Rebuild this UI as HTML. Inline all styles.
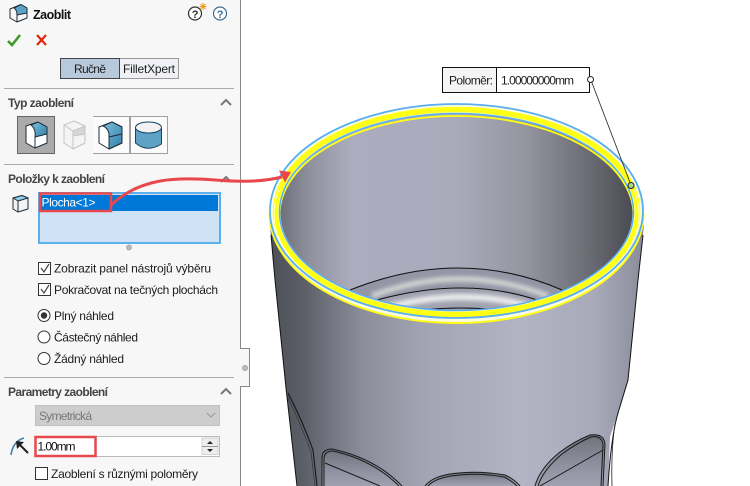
<!DOCTYPE html>
<html><head><meta charset="utf-8">
<style>
html,body{margin:0;padding:0;background:#fff}
body{width:750px;height:486px;overflow:hidden;position:relative;font-family:"Liberation Sans",sans-serif}
svg{position:absolute;left:0;top:0}
text{font-family:"Liberation Sans",sans-serif;font-size:12px;fill:#1c1c1c}
.b{font-size:12px;font-weight:bold;fill:#444}
</style></head><body>
<svg width="750" height="486" viewBox="0 0 750 486">
<defs>
<linearGradient id="body" gradientUnits="userSpaceOnUse" x1="272" x2="640" y1="0" y2="0">
<stop offset="0" stop-color="#50525a"/><stop offset=".08" stop-color="#5b5d66"/><stop offset=".24" stop-color="#8a8c99"/><stop offset=".42" stop-color="#a3a5b4"/><stop offset=".68" stop-color="#b2b4c5"/><stop offset=".88" stop-color="#a8aaba"/><stop offset="1" stop-color="#8d8f9d"/>
</linearGradient>
<linearGradient id="inn" gradientUnits="userSpaceOnUse" x1="282" x2="630" y1="0" y2="0">
<stop offset="0" stop-color="#70727c"/><stop offset=".08" stop-color="#8f919e"/><stop offset=".2" stop-color="#abadbf"/><stop offset=".5" stop-color="#a9abbc"/><stop offset=".7" stop-color="#94959f"/><stop offset=".9" stop-color="#66676f"/><stop offset="1" stop-color="#4c4d55"/>
</linearGradient>
<linearGradient id="bl" x1="0" x2="1" y1="0" y2="1">
<stop offset="0" stop-color="#7fc0de"/><stop offset="1" stop-color="#2f7fa8"/>
</linearGradient>
<linearGradient id="pk" x1="0" x2="0" y1="0" y2="1">
<stop offset="0" stop-color="#6e707b"/><stop offset=".6" stop-color="#8f91a0"/><stop offset="1" stop-color="#9fa1b0"/>
</linearGradient>
<clipPath id="ci"><ellipse cx="456.500" cy="212.500" rx="175" ry="97.500"/></clipPath>
<clipPath id="lo"><rect x="260" y="190" width="395" height="140"/></clipPath>
<filter id="sf" x="-20%" y="-50%" width="140%" height="200%"><feGaussianBlur stdDeviation="2"/></filter>
</defs>

<!-- part body -->
<path d="M270 225 L275 280 L286 388 L297 486 L608 486 L610 437 L618 413 L628 380 L638 280 L644 225 Z" fill="url(#body)"/>
<path d="M271 235 L275 280 L286 388 L297 486" fill="none" stroke="#111"/>
<path d="M643 235 L638 280 L628 380 L618 413 Q611 437 608 486" fill="none" stroke="#111"/>
<path d="M288 393 Q303 422 313 450 L317 486" fill="none" stroke="#111"/>
<path d="M287 396 Q301 424 311 452 L315 486" fill="none" stroke="#333" stroke-width=".7"/>
<path d="M615 424 Q611 450 612 486" fill="none" stroke="#222" stroke-width=".8"/>
<!-- pockets -->
<g fill="none" stroke="#1a1a1a" stroke-width="1">
<path d="M322 486 L322 458 Q322 449 332 449 Q375 458 402 486" fill="url(#pk)"/>
<path d="M324 486 L324 459 Q324 451 333 451 Q373 460 399 486"/>
<path d="M325 463 L380 486"/>
<path d="M425 486 Q432 477 450 474 Q477 470 505 475 Q514 479 520 486" fill="url(#pk)"/>
<path d="M428 486 Q434 479 451 476 Q477 472 504 477 Q512 481 517 486"/>
<path d="M535 486 Q540 468 560 452 Q575 441 590 435 Q604 433 605 444 L603 486" fill="url(#pk)"/>
<path d="M538 486 Q543 470 562 454 Q577 443 591 437 Q602 435 603 445 L601 486"/>
<path d="M540 486 L603 450"/>
</g>

<!-- rim base -->
<ellipse cx="456.500" cy="213.500" rx="187" ry="109" fill="#fbfbe0"/>
<!-- inside -->
<ellipse cx="456.500" cy="212.500" rx="176" ry="98.500" fill="url(#inn)"/>
<g clip-path="url(#ci)">
<path d="M350 290 Q460 246 562 290 L575 320 L340 320 Z" fill="#9496a6"/>
<path d="M372 296 Q460 262 548 296" fill="none" stroke="#d9d9d6" stroke-width="5" filter="url(#sf)"/>
<path d="M377 300 Q465 276 537 300 L560 320 L360 320 Z" fill="#a0a2b0"/>
<path d="M385 308 Q465 286 535 308" fill="none" stroke="#f0f0f0" stroke-width="6" filter="url(#sf)"/>
<path d="M350 290 Q460 246 562 290" fill="none" stroke="#111" stroke-width="1.100"/>
<path d="M377 300 Q465 276 537 300" fill="none" stroke="#111" stroke-width="1.100"/>
<path d="M423 310 Q460 306 500 310" fill="none" stroke="#111" stroke-width="1.100"/>
</g>

<!-- rim -->
<path d="M269.500 213.500 A187 109.500 0 0 0 643.500 213.500" fill="none" stroke="#ffff14" stroke-width="2"/>
<path d="M279.500 215 A177 99 0 0 1 633.500 215" fill="none" stroke="#ffff14" stroke-width="1.800"/>
<ellipse cx="456.500" cy="212" rx="181" ry="102.500" fill="none" stroke="#ffff14" stroke-width="5.500"/>
<ellipse cx="456.500" cy="214" rx="182.500" ry="104" fill="none" stroke="#fff" stroke-width=".7" clip-path="url(#lo)"/>
<ellipse cx="456.500" cy="211" rx="186.500" ry="107" fill="none" stroke="#58aef0" stroke-width="1.800"/>
<ellipse cx="456.500" cy="212" rx="177" ry="98.500" fill="none" stroke="#58aef0" stroke-width="1.500"/>

<!-- callout -->
<path d="M590.500 79 L631 185" stroke="#222" stroke-width=".8"/>
<rect x="442.500" y="67.500" width="147" height="25" fill="#fff" stroke="#111"/>
<rect x="443" y="68" width="53" height="24" fill="#f5f5f5"/>
<line x1="496.500" y1="67.500" x2="496.500" y2="92.500" stroke="#111"/>
<text x="449" y="84.500" textLength="44">Poloměr:</text>
<text x="501" y="84.500" textLength="73">1.00000000mm</text>
<circle cx="590.500" cy="79.500" r="3" fill="#fff" stroke="#222"/>
<circle cx="631" cy="185.500" r="3" fill="#a8d890" stroke="#222"/>

<!-- panel -->
<path d="M0 0H240.500V348.500H249.500V386.500H240.500V486H0Z" fill="#f7f7f7"/>
<path d="M240.500 0V348.500H249.500V386.500H240.500V486" fill="none" stroke="#888"/>
<circle cx="245" cy="368" r="2.600" fill="#bbb" stroke="#999" stroke-width=".7"/>

<!-- header -->
<g stroke="#1d2c36" stroke-width="1" stroke-linejoin="round">
<path d="M10 9 L21 4.500 L27 8 L27 18 L17 22 L10 18 Z" fill="#f6f6f6"/>
<path d="M14 8 L21 4.500 L27 8 L27 13 L17 15 Q17 10 14 8 Z" fill="#5ba3c7"/>
<path d="M17 15 L17 22" fill="none"/>
</g>
<text x="33" y="19" textLength="38" style="font-size:12.500px;font-weight:bold;fill:#111">Zaoblit</text>
<circle cx="195" cy="13.500" r="6.500" fill="#fff" stroke="#333" stroke-width="1.200"/>
<text x="191.800" y="17.800" style="font-size:11px;font-weight:bold;fill:#333">?</text>
<path d="M203 3 v7 M199.500 6.500 h7 M200.500 4 l5 5 M205.500 4 l-5 5" stroke="#ee9a20" stroke-width="1"/>
<circle cx="220" cy="13.500" r="6.500" fill="#fff" stroke="#3e6d8e" stroke-width="1.200"/>
<text x="216.800" y="17.800" style="font-size:11px;font-weight:bold;fill:#3e6d8e">?</text>
<path d="M8 41 L12 45 L20 35" fill="none" stroke="#3f9a2b" stroke-width="2.600"/>
<path d="M37 35 L46 45 M46 35 L37 45" fill="none" stroke="#e0260f" stroke-width="2.200"/>

<!-- tabs -->
<rect x="119.500" y="58.500" width="59" height="20" fill="#eef0f5" stroke="#9a9a9a"/>
<rect x="60.500" y="58.500" width="59" height="20" fill="#b9c9dc" stroke="#444"/>
<text x="74" y="73" textLength="32">Ručně</text>
<text x="123" y="73" textLength="52">FilletXpert</text>

<line x1="4" y1="88.500" x2="234" y2="88.500" stroke="#aaa"/>
<text class="b" x="8" y="107" textLength="66">Typ zaoblení</text>
<path d="M221 105 L226 100 L231 105" fill="none" stroke="#777" stroke-width="2"/>

<!-- type buttons -->
<rect x="17.500" y="116.500" width="37" height="37" fill="#ababab" stroke="#666"/>
<path d="M93 116.500H129.500V153.500H93" fill="#fbfbfb" stroke="#a0a0a0"/>
<rect x="130.500" y="116.500" width="37" height="37" fill="#fbfbfb" stroke="#a0a0a0"/>
<rect x="129" y="116" width="2" height="38" fill="#a0a0a0"/>
<g stroke="#1d2c36" stroke-width="1" stroke-linejoin="round">
<path d="M26 126 L38 122 L47 127 L47 143 L35 148 L26 143 Z" fill="#fff"/>
<path d="M31 125 L38 122 L47 127 L47 134 L35 137 Q36 129 31 125 Z" fill="url(#bl)"/>
<path d="M35 137 L35 148" fill="none"/>
</g>
<g stroke="#c4c4c4" stroke-width="1" stroke-linejoin="round">
<path d="M64 125 L74 121 L85 126 L85 143 L73 149 L64 143 Z" fill="#f4f4f4"/>
<path d="M73 131 L85 126 L85 134 L73 136 Z" fill="#d6d6d6"/>
<path d="M64 125 L73 131 L73 149" fill="none"/>
</g>
<g stroke="#1d2c36" stroke-width="1" stroke-linejoin="round">
<path d="M99 127 L112 122 L122 127 L122 143 L109 149 L99 143 Z" fill="#fff"/>
<path d="M103 126 L112 122 L122 127 L122 143 L109 149 L109 134 Q108 128 103 126 Z" fill="url(#bl)"/>
<path d="M109 137 L122 134" fill="none"/>
</g>
<g stroke="#14465f" stroke-width="1">
<path d="M135.500 128 V143 Q147 153 161.500 144 V128 Z" fill="#5ea3c6"/>
<ellipse cx="148.500" cy="127.500" rx="13" ry="5.500" fill="#f2f2f2"/>
</g>

<line x1="4" y1="164.500" x2="234" y2="164.500" stroke="#aaa"/>
<text class="b" x="8" y="183" textLength="97">Položky k zaoblení</text>
<path d="M221 182 L226 177 L231 182" fill="none" stroke="#777" stroke-width="2"/>

<!-- selection list -->
<g stroke="#1d2c36" stroke-width="1" stroke-linejoin="round">
<path d="M13 198 L22 195.500 L28 198 L28 209 L18 212 L13 209 Z" fill="#f4f4f4"/>
<path d="M13 198 L22 195.500 L28 198 L18 201 Z" fill="#8fd0ee"/>
<path d="M18 201 V212" fill="none"/>
</g>
<rect x="39" y="193" width="181" height="50" fill="#cfe3f7" stroke="#5cb0ee" stroke-width="2"/>
<rect x="40" y="195" width="178" height="16" fill="#0078d7"/>
<text x="41.500" y="206.500" textLength="54" style="fill:#fff">Plocha&lt;1&gt;</text>
<rect x="40" y="193.500" width="71" height="17.500" fill="none" stroke="#e8474c" stroke-width="2.500"/>
<circle cx="129" cy="247.500" r="2.500" fill="#bbb" stroke="#999" stroke-width=".7"/>

<!-- checkboxes -->
<g fill="#fff" stroke="#333"><rect x="38.500" y="262.500" width="12" height="12"/><rect x="38.500" y="283.500" width="12" height="12"/></g>
<path d="M41 268 L44 272 L49 264 M41 289 L44 293 L49 285" fill="none" stroke="#444" stroke-width="1.200"/>
<text x="54" y="272.500" textLength="157">Zobrazit panel nástrojů výběru</text>
<text x="54" y="294" textLength="164">Pokračovat na tečných plochách</text>
<circle cx="44" cy="315.500" r="6" fill="#fff" stroke="#333"/><circle cx="44" cy="315.500" r="3.200" fill="#333"/>
<text x="54" y="320" textLength="60">Plný náhled</text>
<circle cx="44" cy="337" r="6" fill="#fff" stroke="#333"/>
<text x="54" y="341.500" textLength="84">Částečný náhled</text>
<circle cx="44" cy="358.500" r="6" fill="#fff" stroke="#333"/>
<text x="54" y="363" textLength="70">Žádný náhled</text>

<line x1="4" y1="377.500" x2="234" y2="377.500" stroke="#aaa"/>
<text class="b" x="8" y="396" textLength="100">Parametry zaoblení</text>
<path d="M221 394 L226 389 L231 394" fill="none" stroke="#777" stroke-width="2"/>

<rect x="35.500" y="405.500" width="184" height="20" fill="#cdcdcd" stroke="#c0c0c0"/>
<text x="39" y="420" textLength="53" style="fill:#777">Symetrická</text>
<path d="M207 413 L211 417 L215 413" fill="none" stroke="#999"/>

<path d="M11 455 Q13 441 24 438" fill="none" stroke="#3e80a8" stroke-width="1.600"/>
<path d="M28 453 L18 443" fill="none" stroke="#222" stroke-width="2"/>
<path d="M16 441 L24 442 L17 449 Z" fill="#222"/>
<rect x="35.500" y="436.500" width="184" height="20" fill="#fff" stroke="#bbb"/>
<rect x="202" y="438" width="16" height="16.500" fill="#eee" stroke="#bbb" stroke-width=".6"/>
<line x1="202" y1="446.500" x2="218" y2="446.500" stroke="#999"/>
<path d="M207 444 L210 441 L213 444 Z M207 449 H213 L210 452 Z" fill="#222"/>
<text x="37.500" y="450.500" textLength="38" style="fill:#111">1.00mm</text>
<rect x="35.500" y="437" width="60" height="19" fill="none" stroke="#e8474c" stroke-width="2.500"/>
<rect x="35.500" y="467.500" width="12" height="12" fill="#fff" stroke="#333"/>
<text x="51" y="478" textLength="147">Zaoblení s různými poloměry</text>

<!-- red arrow -->
<path d="M111 205 C140 178 175 177 215 180 C240 182 262 182 282 177" fill="none" stroke="#e8474c" stroke-width="3"/>
<path d="M279 170.500 L291 172 L285 182.500 Z" fill="#e8474c"/>
</svg>
</body></html>
